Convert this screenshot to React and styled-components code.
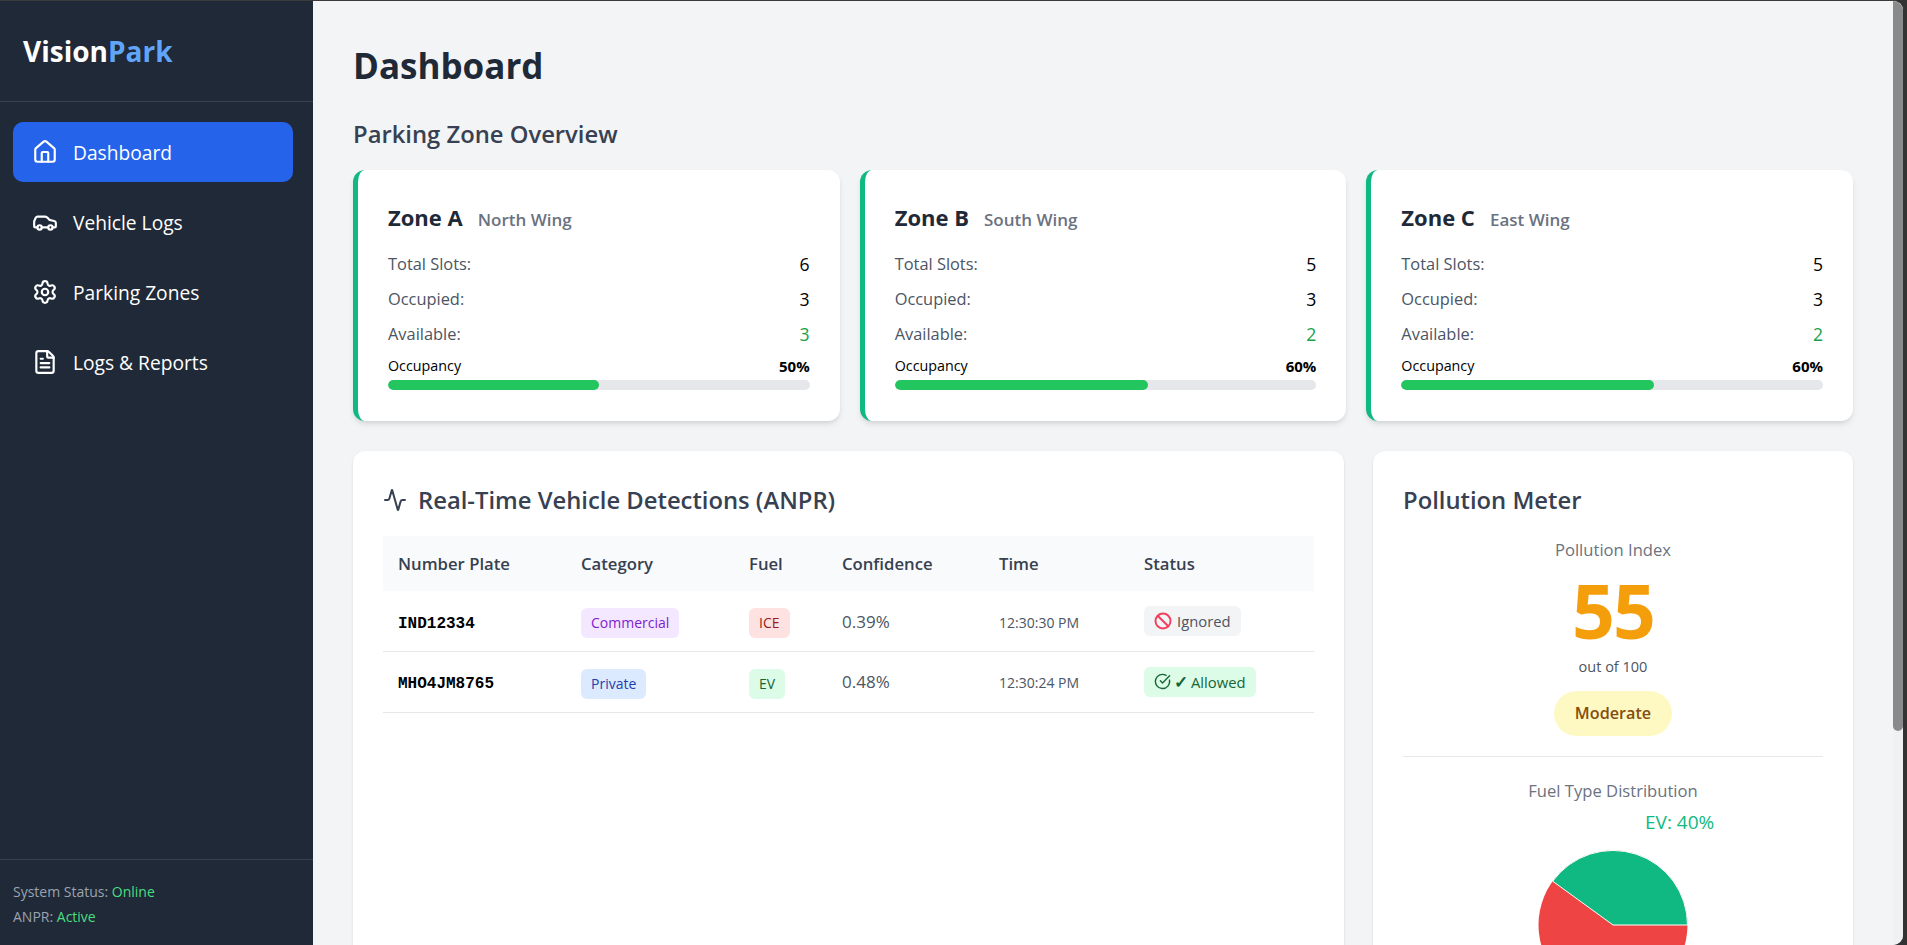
import React from 'react'
import styled, { createGlobalStyle } from 'styled-components'
import { Home, Car, Settings, FileText, Activity, Ban, CircleCheckBig } from 'lucide-react'

const GlobalStyle = createGlobalStyle`
  * { box-sizing: border-box; }
  html, body { margin: 0; height: 100%; overflow: hidden; background: #333; }
  body { font-family: "Open Sans", "Noto Sans", "Liberation Sans", sans-serif; }
`

const Shell = styled.div`
  display: flex;
  width: 1903px;
  height: 945px;
  border-top: 1px solid #3a3a3a;
  border-radius: 0 10px 10px 0;
  background: #f3f4f6;
  overflow: hidden;
  position: relative;
`
const Sidebar = styled.aside`
  width: 313px;
  flex-shrink: 0;
  background: #1f2937;
  color: #fff;
  display: flex;
  flex-direction: column;
`
const Brand = styled.div`
  height: 101px;
  padding: 0 23px;
  display: flex;
  align-items: center;
  font-size: 28px;
  font-weight: 700;
  border-bottom: 1px solid #374151;
  span { color: #60a5fa; }
`
const Nav = styled.nav`
  flex: 1;
  padding: 20px 20px 20px 13px;
  display: flex;
  flex-direction: column;
  gap: 10px;
`
const NavItem = styled.a`
  height: 60px;
  padding: 0 19px;
  border-radius: 10px;
  display: flex;
  align-items: center;
  gap: 15px;
  font-size: 19.2px;
  color: #fff;
  background: ${(props) => (props.$active ? '#2563eb' : 'transparent')};
`
const SideFoot = styled.div`
  height: 86px;
  padding: 19px 13px;
  border-top: 1px solid #374151;
  font-size: 14px;
  line-height: 25px;
  color: #9ca3af;
  span { color: #4ade80; }
`
const Main = styled.main`
  flex: 1;
  padding: 41px 50px 0 40px;
  overflow: hidden;
`
const Title = styled.h1`
  margin: 0;
  font-size: 35px;
  line-height: 48px;
  font-weight: 700;
  color: #1f2937;
`
const SubTitle = styled.h2`
  margin: 28px 0 0;
  font-size: 23.8px;
  line-height: 32px;
  font-weight: 600;
  color: #374151;
`
const ZoneGrid = styled.div`
  margin-top: 20px;
  display: grid;
  grid-template-columns: repeat(3, 1fr);
  gap: 20px;
`
const ZoneCard = styled.section`
  height: 251px;
  background: #fff;
  border-left: 5px solid #10b981;
  border-radius: 12px;
  box-shadow: 0 4px 6px -1px rgba(0, 0, 0, 0.1), 0 2px 4px -2px rgba(0, 0, 0, 0.1);
  padding: 32px 30px 0 30px;
`
const ZoneHead = styled.div`
  display: flex;
  align-items: baseline;
  gap: 15px;
  margin-bottom: 14px;
`
const ZoneName = styled.h3`
  margin: 0;
  font-size: 22px;
  line-height: 30px;
  font-weight: 700;
  color: #1f2937;
`
const ZoneWing = styled.span`
  font-size: 17px;
  font-weight: 600;
  color: #6b7280;
`
const StatRow = styled.div`
  display: flex;
  justify-content: space-between;
  height: 35px;
  align-items: center;
  font-size: 16.4px;
  color: #4b5563;
`
const StatValue = styled.span`
  font-size: 17.6px;
  font-weight: 500;
  color: ${(props) => (props.$green ? '#16a34a' : '#000')};
`
const OccRow = styled.div`
  display: flex;
  justify-content: space-between;
  margin-top: 4px;
  font-size: 14.3px;
  line-height: 22px;
  color: #000;
  b { font-size: 15px; font-weight: 700; }
`
const Track = styled.div`
  height: 10px;
  margin-top: 3px;
  background: #e5e7eb;
  border-radius: 5px;
  overflow: hidden;
`
const Fill = styled.div`
  height: 100%;
  background: #22c55e;
  border-radius: 5px;
`
const Lower = styled.div`
  margin-top: 30px;
  display: grid;
  grid-template-columns: 1fr 480px;
  gap: 29px;
`
const Panel = styled.section`
  height: 700px;
  background: #fff;
  border-radius: 12px;
  box-shadow: 0 1px 3px rgba(0, 0, 0, 0.1), 0 1px 2px -1px rgba(0, 0, 0, 0.1);
  padding: 33px 30px 30px;
`
const PanelTitle = styled.h2`
  margin: 0;
  display: flex;
  align-items: center;
  gap: 11px;
  font-size: 23.8px;
  line-height: 32px;
  font-weight: 600;
  color: #374151;
`
const Table = styled.table`
  width: 100%;
  margin-top: 20px;
  border-collapse: collapse;
  table-layout: fixed;
`
const Th = styled.th`
  height: 55px;
  padding: 0 15px;
  background: #f9fafb;
  text-align: left;
  font-size: 16.7px;
  font-weight: 600;
  color: #374151;
  width: ${(props) => props.$w}px;
`
const Tr = styled.tr`
  height: 60.5px;
  border-bottom: 1px solid #e5e7eb;
`
const Td = styled.td`
  padding: 0 15px;
  font-size: 17px;
  color: #4b5563;
`
const Plate = styled.span`
  font-family: "Liberation Mono", monospace;
  font-size: 16px;
  font-weight: 700;
  color: #000;
`
const Tag = styled.span`
  display: inline-block;
  height: 30px;
  line-height: 30px;
  margin-top: 4px;
  padding: 0 10px;
  border-radius: 6px;
  font-size: 14px;
  background: ${(props) => props.$bg};
  color: ${(props) => props.$fg};
`
const Clock = styled.span`
  font-size: 14px;
  color: #4b5563;
`
const Status = styled.span`
  display: inline-flex;
  align-items: center;
  gap: ${(props) => props.$gap}px;
  height: 30px;
  padding: 0 10px;
  border-radius: 6px;
  font-size: 14.8px;
  font-weight: 500;
  background: ${(props) => props.$bg};
  color: ${(props) => props.$fg};
`
const CheckMark = styled.span`
  font-size: 17px;
  font-weight: 700;
  line-height: 1;
`
const Meter = styled.div`
  text-align: center;
`
const MeterLabel = styled.div`
  margin-top: 22px;
  font-size: 16.6px;
  line-height: 24px;
  color: #6b7280;
`
const MeterValue = styled.div`
  font-size: 75px;
  line-height: 72px;
  letter-spacing: -2px;
  margin-top: 12px;
  font-weight: 700;
  color: #f59e0b;
`
const MeterOf = styled.div`
  margin-top: 11px;
  font-size: 14.5px;
  line-height: 20px;
  color: #4b5563;
`
const MeterBadge = styled.div`
  display: inline-block;
  margin-top: 14px;
  padding: 0 21px;
  height: 45px;
  line-height: 45px;
  border-radius: 23px;
  background: #fef9c3;
  color: #854d0e;
  font-size: 16.2px;
  font-weight: 600;
`
const Divider = styled.hr`
  margin: 20px 0 0;
  border: 0;
  border-top: 1px solid #e5e7eb;
`
const PieBox = styled.div`
  position: relative;
  height: 320px;
  margin-top: 6px;
`
const PieLabel = styled.span`
  position: absolute;
  left: 242px;
  top: 0;
  font-size: 19px;
  color: #10b981;
`
const Pie = styled.svg`
  position: absolute;
  left: 135px;
  top: 41px;
`
const ScrollTrack = styled.div`
  position: absolute;
  top: 0;
  right: 0;
  bottom: 0;
  width: 10px;
  background: #f1f1f1;
`
const ScrollThumb = styled.div`
  height: 730px;
  background: #8a8a8a;
  border-radius: 0 0 5px 5px;
`

const zones = [
  { name: 'Zone A', wing: 'North Wing', total: 6, occupied: 3, free: 3, pct: 50 },
  { name: 'Zone B', wing: 'South Wing', total: 5, occupied: 3, free: 2, pct: 60 },
  { name: 'Zone C', wing: 'East Wing', total: 5, occupied: 3, free: 2, pct: 60 },
]

const navItems = [
  { label: 'Dashboard', icon: Home, active: true },
  { label: 'Vehicle Logs', icon: Car },
  { label: 'Parking Zones', icon: Settings },
  { label: 'Logs & Reports', icon: FileText },
]

function App() {
  return (
    <>
      <GlobalStyle />
      <Shell>
        <Sidebar>
          <Brand>
            <div>Vision<span>Park</span></div>
          </Brand>
          <Nav>
            {navItems.map((item) => (
              <NavItem key={item.label} $active={item.active}>
                <item.icon size={26} strokeWidth={2} />
                {item.label}
              </NavItem>
            ))}
          </Nav>
          <SideFoot>
            <div>System Status: <span>Online</span></div>
            <div>ANPR: <span>Active</span></div>
          </SideFoot>
        </Sidebar>
        <Main>
          <Title>Dashboard</Title>
          <SubTitle>Parking Zone Overview</SubTitle>
          <ZoneGrid>
            {zones.map((zone) => (
              <ZoneCard key={zone.name}>
                <ZoneHead>
                  <ZoneName>{zone.name}</ZoneName>
                  <ZoneWing>{zone.wing}</ZoneWing>
                </ZoneHead>
                <StatRow>Total Slots:<StatValue>{zone.total}</StatValue></StatRow>
                <StatRow>Occupied:<StatValue>{zone.occupied}</StatValue></StatRow>
                <StatRow>Available:<StatValue $green>{zone.free}</StatValue></StatRow>
                <OccRow>Occupancy<b>{zone.pct}%</b></OccRow>
                <Track><Fill style={{ width: `${zone.pct}%` }} /></Track>
              </ZoneCard>
            ))}
          </ZoneGrid>
          <Lower>
            <Panel>
              <PanelTitle><Activity size={24} strokeWidth={2} />Real-Time Vehicle Detections (ANPR)</PanelTitle>
              <Table>
                <thead>
                  <tr>
                    <Th $w={183}>Number Plate</Th>
                    <Th $w={168}>Category</Th>
                    <Th $w={93}>Fuel</Th>
                    <Th $w={157}>Confidence</Th>
                    <Th $w={145}>Time</Th>
                    <Th>Status</Th>
                  </tr>
                </thead>
                <tbody>
                  <Tr>
                    <Td><Plate>IND12334</Plate></Td>
                    <Td><Tag $bg="#f3e8ff" $fg="#7e22ce">Commercial</Tag></Td>
                    <Td><Tag $bg="#fee2e2" $fg="#991b1b">ICE</Tag></Td>
                    <Td>0.39%</Td>
                    <Td><Clock>12:30:30 PM</Clock></Td>
                    <Td><Status $gap={5} $bg="#f3f4f6" $fg="#4b5563"><Ban size={18} strokeWidth={2.6} color="#f43f5e" />Ignored</Status></Td>
                  </Tr>
                  <Tr>
                    <Td><Plate>MHO4JM8765</Plate></Td>
                    <Td><Tag $bg="#dbeafe" $fg="#1e40af">Private</Tag></Td>
                    <Td><Tag $bg="#dcfce7" $fg="#166534">EV</Tag></Td>
                    <Td>0.48%</Td>
                    <Td><Clock>12:30:24 PM</Clock></Td>
                    <Td><Status $gap={3} $bg="#dcfce7" $fg="#166534"><CircleCheckBig size={17} /><CheckMark>✓</CheckMark>Allowed</Status></Td>
                  </Tr>
                </tbody>
              </Table>
            </Panel>
            <Panel>
              <PanelTitle>Pollution Meter</PanelTitle>
              <Meter>
                <MeterLabel>Pollution Index</MeterLabel>
                <MeterValue>55</MeterValue>
                <MeterOf>out of 100</MeterOf>
                <MeterBadge>Moderate</MeterBadge>
                <Divider />
                <MeterLabel>Fuel Type Distribution</MeterLabel>
              </Meter>
              <PieBox>
                <PieLabel>EV: 40%</PieLabel>
                <Pie width="150" height="150" viewBox="-75 -75 150 150">
                  <circle r="74.5" fill="#ef4444" />
                  <path d="M0 0 L74.5 0 A74.5 74.5 0 0 0 -60.3 -43.8 Z" fill="#10b981" stroke="#fff" strokeWidth="1" />
                </Pie>
              </PieBox>
            </Panel>
          </Lower>
        </Main>
        <ScrollTrack><ScrollThumb /></ScrollTrack>
      </Shell>
    </>
  )
}

export default App
